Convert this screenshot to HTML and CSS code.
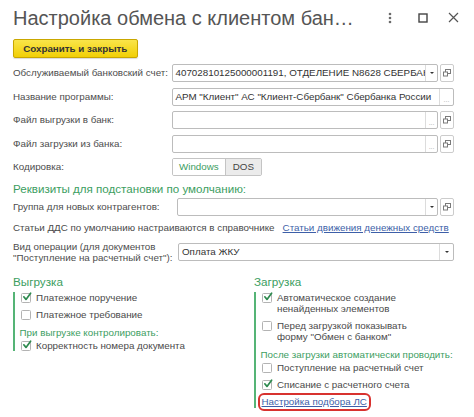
FILE: index.html
```html
<!DOCTYPE html>
<html lang="ru">
<head>
<meta charset="utf-8">
<title>Настройка обмена с клиентом банка</title>
<link rel="stylesheet" href="styles.css">
</head>
<body>
<div class="window">
  <header class="titlebar">
    <h1 class="title">Настройка обмена с клиентом бан…</h1>
    <div class="win-actions">
      <svg class="ico-more" width="4" height="12" viewBox="0 0 4 12"><circle cx="2" cy="2" r="1.3"/><circle cx="2" cy="6" r="1.3"/><circle cx="2" cy="10" r="1.3"/></svg>
      <svg class="ico-max" width="10" height="10" viewBox="0 0 10 10"><rect x="1" y="1" width="8" height="8"/></svg>
      <svg class="ico-close" width="11" height="11" viewBox="0 0 11 11"><path d="M1 1L10 10M10 1L1 10"/></svg>
    </div>
  </header>

  <div class="toolbar">
    <button class="btn-primary" type="button">Сохранить и закрыть</button>
  </div>

  <div class="form form-main">
    <label class="lbl">Обслуживаемый банковский счет:</label>
    <div class="ctrl">
      <div class="field">
        <span class="field-text">40702810125000001191, ОТДЕЛЕНИЕ N8628 СБЕРБАНКА РОССИИ</span>
        <span class="field-btn"><i class="tri"></i></span>
      </div>
      <span class="open-btn"><svg width="8" height="8" viewBox="0 0 8 8"><rect x="2.5" y="0.5" width="5" height="4"/><rect x="0.5" y="3" width="4" height="4"/></svg></span>
    </div>

    <label class="lbl">Название программы:</label>
    <div class="ctrl">
      <div class="field">
        <span class="field-text">АРМ "Клиент" АС "Клиент-Сбербанк" Сбербанка России</span>
        <span class="field-btn wide"><i class="dots">...</i></span>
      </div>
    </div>

    <label class="lbl">Файл выгрузки в банк:</label>
    <div class="ctrl">
      <div class="field">
        <span class="field-text"></span>
        <span class="field-btn"><i class="dots">...</i></span>
      </div>
      <span class="open-btn"><svg width="8" height="8" viewBox="0 0 8 8"><rect x="2.5" y="0.5" width="5" height="4"/><rect x="0.5" y="3" width="4" height="4"/></svg></span>
    </div>

    <label class="lbl">Файл загрузки из банка:</label>
    <div class="ctrl">
      <div class="field">
        <span class="field-text"></span>
        <span class="field-btn"><i class="dots">...</i></span>
      </div>
      <span class="open-btn"><svg width="8" height="8" viewBox="0 0 8 8"><rect x="2.5" y="0.5" width="5" height="4"/><rect x="0.5" y="3" width="4" height="4"/></svg></span>
    </div>

    <label class="lbl">Кодировка:</label>
    <div class="ctrl">
      <div class="seg">
        <span class="seg-item active">Windows</span>
        <span class="seg-item">DOS</span>
      </div>
    </div>
  </div>

  <h2 class="section-title">Реквизиты для подстановки по умолчанию:</h2>

  <div class="form form-defaults">
    <label class="lbl">Группа для новых контрагентов:</label>
    <div class="ctrl">
      <div class="field">
        <span class="field-text"></span>
        <span class="field-btn"><i class="tri"></i></span>
      </div>
      <span class="open-btn"><svg width="8" height="8" viewBox="0 0 8 8"><rect x="2.5" y="0.5" width="5" height="4"/><rect x="0.5" y="3" width="4" height="4"/></svg></span>
    </div>
  </div>

  <div class="note">
    <span>Статьи ДДС по умолчанию настраиваются в справочнике</span>
    <a class="link" href="#">Статьи движения денежных средств</a>
  </div>

  <div class="form form-op">
    <label class="lbl lbl-multi">Вид операции (для документов<br>"Поступление на расчетный счет"):</label>
    <div class="ctrl">
      <div class="field">
        <span class="field-text">Оплата ЖКУ</span>
        <span class="field-btn wide"><i class="tri"></i></span>
      </div>
    </div>
  </div>

  <div class="columns">
    <section class="group">
      <h3 class="group-title">Выгрузка</h3>
      <div class="group-body">
        <div class="check-row"><span class="cb checked"><svg viewBox="0 0 10 10"><path d="M1.8 4.8L4 7.4L8.6 1.2"/></svg></span><span>Платежное поручение</span></div>
        <div class="check-row"><span class="cb"></span><span>Платежное требование</span></div>
        <div class="sub-title">При выгрузке контролировать:</div>
        <div class="check-row"><span class="cb checked"><svg viewBox="0 0 10 10"><path d="M1.8 4.8L4 7.4L8.6 1.2"/></svg></span><span>Корректность номера документа</span></div>
      </div>
    </section>
    <section class="group">
      <h3 class="group-title">Загрузка</h3>
      <div class="group-body">
        <div class="check-row"><span class="cb checked"><svg viewBox="0 0 10 10"><path d="M1.8 4.8L4 7.4L8.6 1.2"/></svg></span><span>Автоматическое создание<br>ненайденных элементов</span></div>
        <div class="check-row"><span class="cb"></span><span>Перед загрузкой показывать<br>форму "Обмен с банком"</span></div>
        <div class="sub-title">После загрузки автоматически проводить:</div>
        <div class="check-row"><span class="cb"></span><span>Поступление на расчетный счет</span></div>
        <div class="check-row"><span class="cb checked"><svg viewBox="0 0 10 10"><path d="M1.8 4.8L4 7.4L8.6 1.2"/></svg></span><span>Списание с расчетного счета</span></div>
        <div class="link-row"><a class="link highlight" href="#">Настройка подбора ЛС</a></div>
      </div>
    </section>
  </div>
</div>
</body>
</html>
```

FILE: styles.css
```css
* { box-sizing: border-box; margin: 0; padding: 0; }

body {
  margin: 0;
  background: #fff;
  font-family: "Liberation Sans", Arial, sans-serif;
  font-size: 9.8px;
  color: #4a4a4a;
}

.window {
  width: 474px;
  height: 417px;
  padding: 0 20px 0 13px;
  overflow: hidden;
}

/* title bar */
.titlebar {
  display: flex;
  align-items: center;
  justify-content: space-between;
  height: 24px;
  margin-top: 6px;
}
.title {
  font-size: 20px;
  font-weight: normal;
  line-height: 24px;
  color: #555;
  white-space: nowrap;
}
.win-actions {
  display: flex;
  align-items: center;
  margin-right: -4.5px;
  margin-top: -1px;
}
.ico-more { fill: #6a6a6a; margin-right: 26px; }
.ico-max { fill: none; stroke: #444; stroke-width: 1.4; margin-right: 20px; }
.ico-close { fill: none; stroke: #555; stroke-width: 1.2; }

/* toolbar */
.toolbar { margin-top: 9px; }
.btn-primary {
  display: block;
  width: 124.5px;
  height: 19px;
  border: 1px solid #c9a700;
  border-radius: 2px;
  background: linear-gradient(#fae54a, #f1cf06);
  box-shadow: 0 1px 1px rgba(0, 0, 0, 0.15);
  font-family: inherit;
  font-size: 9.8px;
  font-weight: bold;
  color: #333;
  line-height: 17px;
}

/* forms */
.form {
  display: grid;
  align-items: center;
}
.form-main {
  grid-template-columns: 158.5px 1fr;
  row-gap: 5.5px;
  margin-top: 6px;
}
.form-defaults {
  grid-template-columns: 164px 1fr;
  margin-top: 1px;
}
.form-op {
  grid-template-columns: 165px 1fr;
  margin-top: 7px;
}
.lbl {
  line-height: 12px;
  white-space: nowrap;
  color: #4d4d4d;
}
.lbl-multi { line-height: 11px; }

.ctrl {
  display: flex;
  align-items: center;
  min-width: 0;
}
.field {
  flex: 1;
  min-width: 0;
  display: flex;
  height: 18px;
  border: 1px solid #bcbcbc;
  border-radius: 2px;
  background: #fff;
}
.field-text {
  flex: 1;
  min-width: 0;
  overflow: hidden;
  white-space: nowrap;
  padding: 0 3px;
  line-height: 16px;
  color: #333;
}
.field-btn {
  flex: none;
  width: 12.5px;
  border-left: 1px solid #dcdcdc;
  display: flex;
  align-items: center;
  justify-content: center;
}
.field-btn.wide { width: 14px; }
.tri {
  display: block;
  width: 0;
  height: 0;
  border-left: 2px solid transparent;
  border-right: 2px solid transparent;
  border-top: 2.5px solid #333;
}
.dots {
  font-style: normal;
  font-size: 7px;
  line-height: 7px;
  color: #aaa;
  align-self: flex-end;
  margin-bottom: 2px;
}
.open-btn {
  flex: none;
  width: 14px;
  height: 18px;
  margin-left: 1.7px;
  border: 1px solid #cccccc;
  border-radius: 2px;
  display: flex;
  align-items: center;
  justify-content: center;
}
.open-btn svg rect {
  fill: #fff;
  stroke: #7a7a7a;
  stroke-width: 1;
}

/* segmented */
.seg {
  display: flex;
  height: 18px;
  border: 1px solid #c4c4c4;
  border-radius: 2px;
  overflow: hidden;
}
.seg-item {
  line-height: 16px;
  padding: 0 7px;
  background: #ebebeb;
  color: #444;
}
.seg-item.active {
  background: #fff;
  color: #3c9e5f;
  border-right: 1px solid #c4c4c4;
  padding: 0 6px 0 6.5px;
}

/* section heading */
.section-title {
  margin-top: 5px;
  font-size: 11.6px;
  font-weight: normal;
  line-height: 16px;
  color: #3c9e5f;
}

.note {
  display: flex;
  gap: 8px;
  margin-top: 6px;
  line-height: 12px;
  white-space: nowrap;
}
.link {
  color: #3d5fa8;
  text-decoration: underline;
}

/* groups */
.columns {
  display: grid;
  grid-template-columns: 241px 1fr;
  margin-top: 11px;
}
.group-title {
  font-size: 11.7px;
  font-weight: normal;
  line-height: 16px;
  color: #3c9e5f;
}
.group-body {
  margin-top: 2px;
  border-left: 2px solid #55b476;
  padding-left: 4.5px;
}
.check-row {
  display: flex;
  align-items: flex-start;
  gap: 5px;
  line-height: 11px;
  margin-bottom: 6px;
  color: #4a4a4a;
}
.check-row:last-child { margin-bottom: 0; }
.cb {
  flex: none;
  width: 10px;
  height: 10px;
  margin-top: 0.5px;
  margin-left: 1.5px;
  border: 1px solid #b3b3b3;
  border-radius: 1.5px;
  background: #fff;
}
.cb svg {
  display: block;
  width: 10px;
  height: 10px;
  margin: -1.5px 0 0 -0.5px;
  overflow: visible;
}
.cb svg path {
  fill: none;
  stroke: #2e8a4f;
  stroke-width: 1.7;
  stroke-linecap: round;
  stroke-linejoin: round;
}
.sub-title {
  font-size: 9.8px;
  line-height: 14px;
  color: #3c9e5f;
  white-space: nowrap;
}
.link-row {
  line-height: 12px;
}
.highlight {
  display: inline-block;
  padding: 0 1px;
  outline: 2px solid #d8322f;
  outline-offset: 1px;
  border-radius: 3px;
}
```
